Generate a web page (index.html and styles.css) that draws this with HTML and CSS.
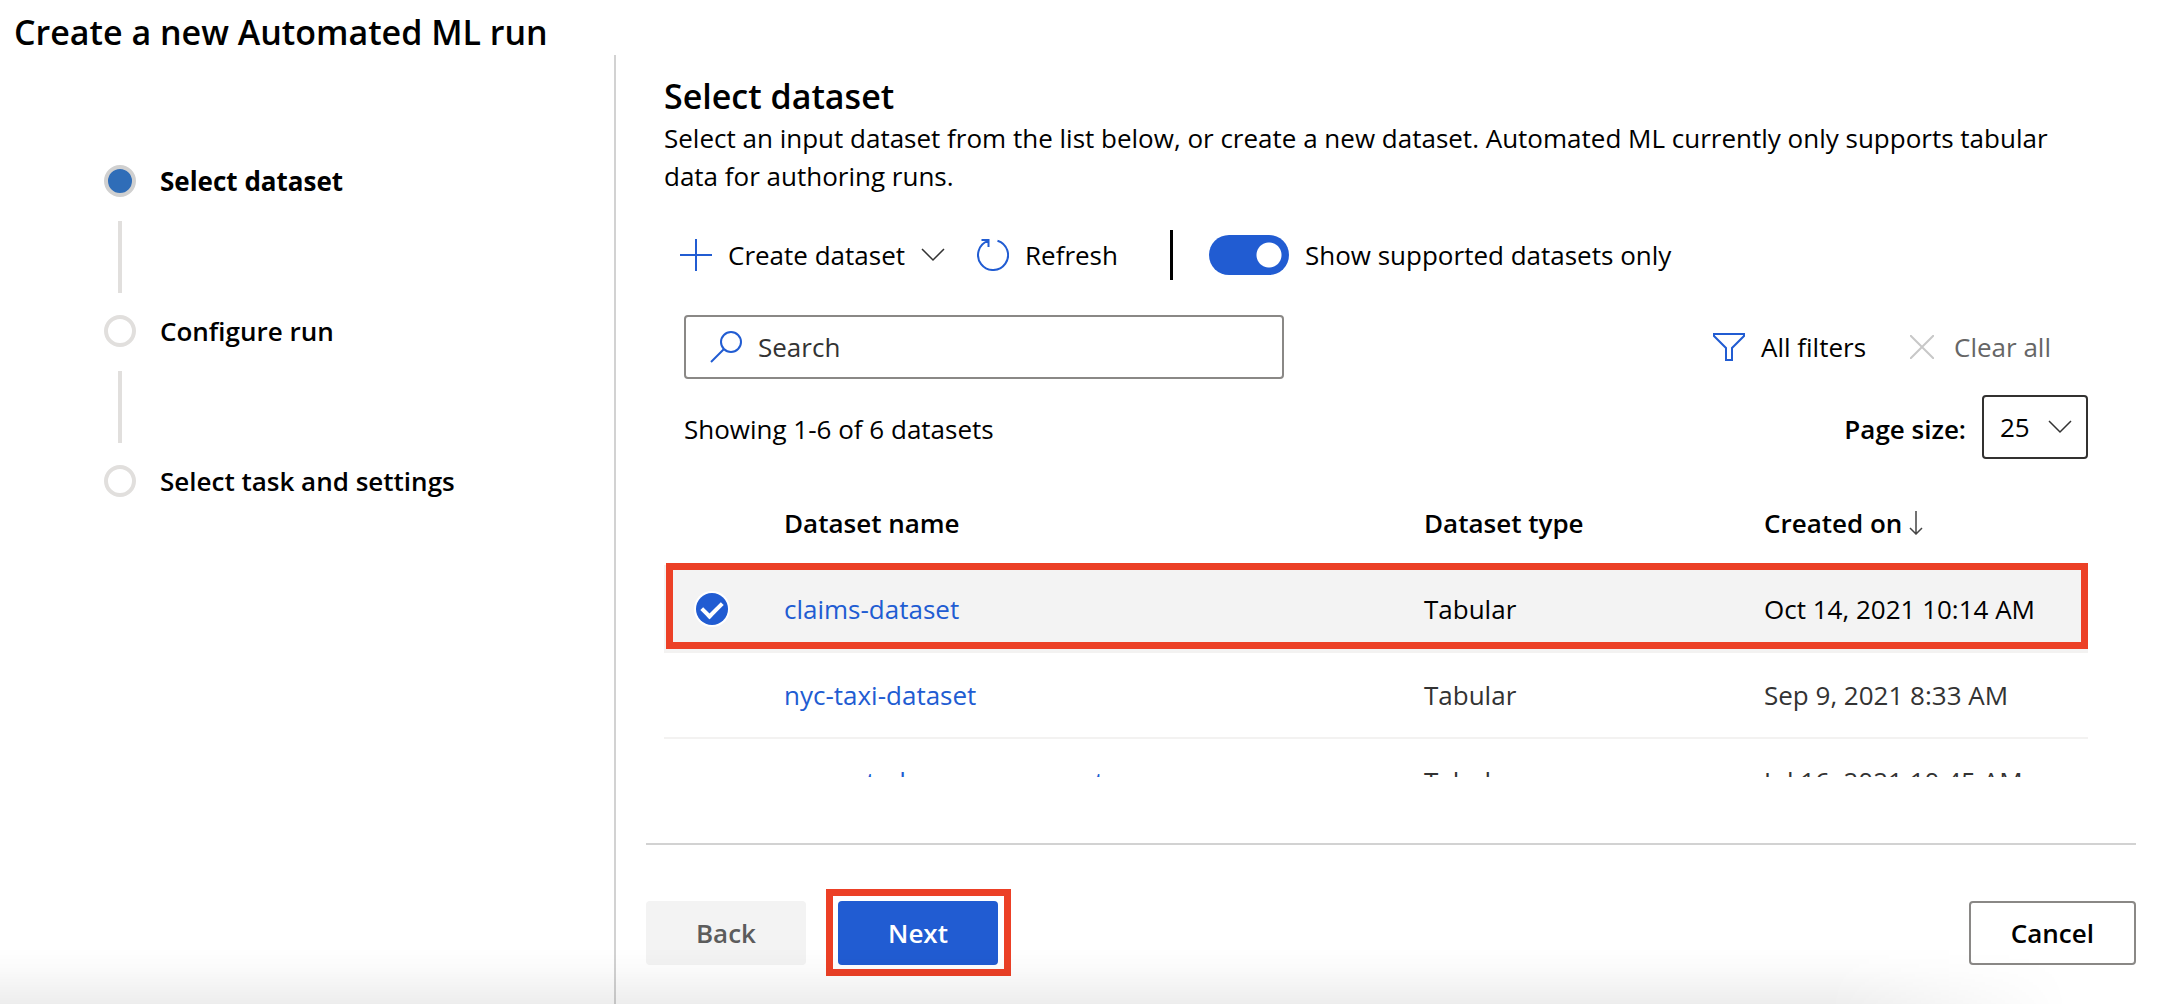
FILE: index.html
```html
<!DOCTYPE html>
<html lang="en">
<head>
<meta charset="utf-8">
<title>Create a new Automated ML run</title>
<link rel="stylesheet" href="styles.css">
</head>
<body>
<div class="page">
  <h1 class="page-title">Create a new Automated ML run</h1>
  <div class="wizard">
    <nav class="steps" aria-label="Wizard steps">
      <ol class="step-list">
        <li class="step step-current" aria-current="step"><span class="dot"></span><span class="step-label">Select dataset</span></li>
        <li class="step"><span class="dot"></span><span class="step-label">Configure run</span></li>
        <li class="step"><span class="dot"></span><span class="step-label">Select task and settings</span></li>
      </ol>
    </nav>
    <main class="content">
      <section class="panel">
        <h2 class="panel-title">Select dataset</h2>
        <p class="panel-text">Select an input dataset from the list below, or create a new dataset. Automated ML currently only supports tabular data for authoring runs.</p>
        <div class="toolbar">
          <button type="button" class="command">
            <svg class="icon" viewBox="0 0 32 32"><path d="M16 0v32M0 16h32"/></svg>
            Create dataset
            <svg class="chevron" viewBox="0 0 24 14"><path d="M1 1l11 11L23 1"/></svg>
          </button>
          <button type="button" class="command">
            <svg class="icon" viewBox="0 0 32 32"><path d="M20.500 1.700A15 15 0 1 1 11 1.900M4.500 1H11.500v7"/></svg>
            Refresh
          </button>
          <span class="separator"></span>
          <label class="toggle"><input type="checkbox" class="switch" checked>Show supported datasets only</label>
        </div>
        <div class="filter-row">
          <label class="search">
            <svg class="icon" viewBox="0 0 32 32"><circle cx="21" cy="11" r="10"/><path d="M14 18L1 31"/></svg>
            <input type="search" class="search-input" placeholder="Search" aria-label="Search">
          </label>
          <div class="filter-actions">
            <button type="button" class="command"><svg class="icon" viewBox="0 0 32 32"><path d="M1 3h30v2L19 17v12h-6V17L1 5z"/></svg>All filters</button>
            <button type="button" class="command command-off" disabled><svg class="clear-icon" viewBox="0 0 24 24"><path d="M0 0l24 24M24 0L0 24"/></svg>Clear all</button>
          </div>
        </div>
        <div class="summary-row">
          <span class="summary-label">Showing 1-6 of 6 datasets</span>
          <div class="page-size">
            <label for="page-size" class="summary-label">Page size:</label>
            <div class="select-box">
              <select id="page-size" class="select"><option>25</option><option>50</option></select>
              <svg class="chevron select-chevron" viewBox="0 0 24 14"><path d="M1 1l11 11L23 1"/></svg>
            </div>
          </div>
        </div>
        <div class="table-view">
          <table class="datasets">
            <thead>
              <tr><th class="col-check"></th><th class="col-name">Dataset name</th><th class="col-type">Dataset type</th><th class="col-date">Created on <svg class="sort" viewBox="0 0 14 24"><path d="M7 0v23M1 17l6 6 6-6"/></svg></th></tr>
            </thead>
            <tbody>
              <tr class="row-selected"><td class="cell-check"><input type="checkbox" class="row-check" aria-label="Select claims-dataset" checked></td><td><a href="#claims">claims-dataset</a></td><td>Tabular</td><td>Oct 14, 2021 10:14 AM</td></tr>
              <tr><td></td><td><a href="#nyc-taxi">nyc-taxi-dataset</a></td><td>Tabular</td><td>Sep 9, 2021 8:33 AM</td></tr>
              <tr><td></td><td><a href="#assessment">converted-ocr-assessment</a></td><td>Tabular</td><td>Jul 16, 2021 10:45 AM</td></tr>
            </tbody>
          </table>
        </div>
      </section>
      <footer class="actions">
        <button type="button" class="button button-off" disabled>Back</button>
        <button type="button" class="button button-primary">Next</button>
        <button type="button" class="button button-cancel">Cancel</button>
      </footer>
    </main>
  </div>
</div>
</body>
</html>
```
FILE: styles.css
```css
* { box-sizing: border-box; }

body {
  margin: 0;
  background: #fff;
  color: #000;
  font: 26px/38px "Open Sans", "Noto Sans", sans-serif;
}

button, input, select { font: inherit; color: inherit; }

svg { fill: none; stroke: currentColor; stroke-width: 2; flex: none; }

.page {
  display: flex;
  flex-direction: column;
  min-height: 100vh;
  position: relative;
}

/* soft shade along the bottom edge */
.page::after {
  content: "";
  position: absolute;
  left: 0;
  right: 96px;
  bottom: 0;
  height: 56px;
  background: linear-gradient(rgba(0, 0, 0, 0), rgba(0, 0, 0, 0.02) 40%, rgba(0, 0, 0, 0.07));
  mask-image: linear-gradient(to left, transparent, #000 240px);
  pointer-events: none;
}

.page-title {
  margin: 0;
  padding: 8px 14px 0;
  height: 55px;
  font-size: 34px;
  line-height: 48px;
  font-weight: 600;
}

.wizard { display: flex; flex: 1; }

.steps {
  flex: none;
  width: 616px;
  border-right: 2px solid #d2d2d2;
  padding: 101px 0 0 104px;
}

.step-list { list-style: none; margin: 0; padding: 0; }

.step {
  display: grid;
  grid-template-columns: 32px 1fr;
  column-gap: 24px;
  font-weight: 600;
}

.step-current { font-weight: 700; }

.dot {
  width: 32px;
  height: 32px;
  margin: 9px 0;
  border: 4px solid #e1dfdd;
  border-radius: 50%;
}

.step-current .dot { border-color: #d0d0d0; background: #2f6db8; }

.step-label { padding-top: 6px; }

.step:not(:last-child)::after {
  content: "";
  width: 4px;
  height: 72px;
  margin: 15px 0 13px 14px;
  background: #e1dfdd;
}

.content {
  flex: 1;
  min-width: 0;
  display: flex;
  flex-direction: column;
  padding: 18px 29px 0 30px;
}

.panel { padding: 0 48px 0 18px; }

.panel-title { margin: 0; font-size: 34px; line-height: 46px; font-weight: 600; }

.panel-text { margin: 0; }

.toolbar {
  display: flex;
  align-items: center;
  gap: 32px;
  height: 50px;
  margin: 35px 0 0 16px;
}

.command {
  display: flex;
  align-items: center;
  gap: 16px;
  padding: 0;
  border: 0;
  background: none;
}

.icon { width: 32px; height: 32px; color: #215cd2; }
.chevron { width: 24px; height: 14px; color: #333; stroke-width: 1.5; }
.separator { width: 3px; height: 50px; margin: 0 4px 0 20px; background: #000; }

.toggle { display: flex; align-items: center; gap: 16px; }

.switch {
  appearance: none;
  width: 80px;
  height: 40px;
  margin: 0;
  border-radius: 20px;
  background: radial-gradient(circle at 60px 20px, #fff 12px, #215cd2 13px);
}

.filter-row {
  display: flex;
  justify-content: space-between;
  align-items: center;
  margin: 35px 37px 0 20px;
}

.search {
  display: flex;
  align-items: center;
  gap: 16px;
  width: 600px;
  height: 64px;
  padding: 0 24px;
  border: 2px solid #8a8886;
  border-radius: 4px;
}

.search-input {
  flex: 1;
  min-width: 0;
  padding: 0;
  border: 0;
  outline: 0;
  background: none;
}

.search-input::placeholder { color: #333; opacity: 1; }

.filter-actions { display: flex; gap: 44px; }
.command-off { color: #666; gap: 20px; }
.clear-icon { width: 24px; height: 24px; color: #c8c8c8; }

.summary-row {
  display: flex;
  justify-content: space-between;
  align-items: center;
  margin: 16px 0 0 20px;
}

.summary-label { padding-top: 4px; }

.page-size { display: flex; align-items: center; gap: 16px; font-weight: 600; }

.select-box { position: relative; font-weight: 400; }

.select {
  display: block;
  appearance: none;
  width: 106px;
  height: 64px;
  padding: 0 16px;
  border: 2px solid #323130;
  border-radius: 4px;
  background: none;
}

.select-chevron { position: absolute; right: 16px; top: 25px; pointer-events: none; }

.table-view { height: 306px; margin-top: 12px; overflow: hidden; }

.datasets { width: 100%; border-collapse: collapse; table-layout: fixed; }

.datasets th, .datasets td {
  height: 86px;
  padding: 0;
  border-bottom: 2px solid #f3f2f1;
  text-align: left;
  color: #333;
}

.datasets th { height: 95px; padding-top: 10px; font-weight: 600; color: #000; }
.datasets a { color: #215cd2; text-decoration: none; }
.col-check { width: 120px; }
.col-type { width: 340px; }
.col-date { width: 324px; }
.sort { width: 14px; height: 24px; color: #444; vertical-align: -2px; stroke-width: 1.5; }

.row-selected { position: relative; background: #f3f3f3; }
.datasets .row-selected td { color: #000; }

.cell-check::after {
  content: "";
  position: absolute;
  inset: -3px 0 3px 2px;
  border: 7px solid #ec4026;
  pointer-events: none;
}

.row-check {
  display: grid;
  place-items: center;
  appearance: none;
  width: 32px;
  height: 32px;
  margin: 0 32px;
  border-radius: 50%;
  background: #215cd2;
  box-shadow: 0 0 0 2px #fff;
}

.row-check::after {
  content: "";
  width: 16px;
  height: 9px;
  margin-bottom: 4px;
  border: solid #fff;
  border-width: 0 0 4px 4px;
  transform: rotate(-45deg);
}

.actions {
  display: flex;
  gap: 32px;
  margin-top: 66px;
  padding-top: 56px;
  border-top: 2px solid #d2d2d2;
}

.button {
  min-width: 160px;
  height: 64px;
  padding: 0 40px;
  border: 0;
  border-radius: 4px;
  font-weight: 600;
}

.button-off { background: #f3f3f3; color: #5c5c5c; }
.button-primary { position: relative; background: #215cd2; color: #fff; }

.button-primary::after {
  content: "";
  position: absolute;
  inset: -12px -13px -11px -12px;
  border: 7px solid #ec4026;
}

.button-cancel { margin-left: auto; border: 2px solid #8a8886; background: #fff; }
```
